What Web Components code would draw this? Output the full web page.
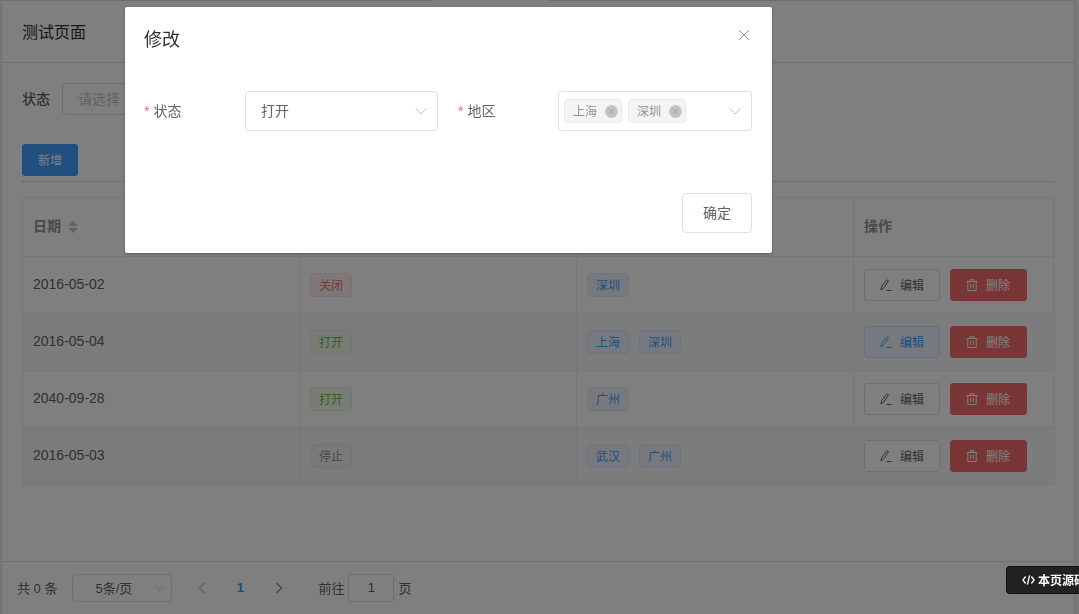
<!DOCTYPE html>
<html lang="zh">
<head>
<meta charset="utf-8">
<title>测试页面</title>
<style>
  html, body { margin: 0; height: 100%; overflow: hidden; background: #eef0f5; }
  body { font-family: "Liberation Sans", "Noto Sans CJK SC", sans-serif; color: #606266; font-size: 14px; }
</style>
</head>
<body>
<test-page></test-page>
<edit-dialog></edit-dialog>
<source-badge></source-badge>

<script>
const ICONS = {
  chevron: '<svg viewBox="0 0 12 7" width="12" height="7" fill="none" stroke="currentColor" stroke-width="1"><path d="M.5.5L6 6 11.5.5"/></svg>',
  left: '<svg viewBox="0 0 8 12" width="8" height="12" fill="none" stroke="currentColor" stroke-width="1.5"><path d="M6.5 1L1.5 6l5 5"/></svg>',
  right: '<svg viewBox="0 0 8 12" width="8" height="12" fill="none" stroke="currentColor" stroke-width="1.5"><path d="M1.5 1l5 5-5 5"/></svg>',
  close: '<svg viewBox="0 0 12 12" width="12" height="12" fill="none" stroke="currentColor" stroke-width="1"><path d="M1 1l10 10M11 1L1 11"/></svg>',
  edit: '<svg viewBox="0 0 12 12" width="12" height="12" fill="none" stroke="currentColor" stroke-width="1"><path d="M1 11l.6-3.4L6.4 1.4q.8-.8 1.5-.2t0 1.6L3.4 9.4zM6.5 11.5h5"/></svg>',
  trash: '<svg viewBox="0 0 12 12" width="12" height="12" fill="none" stroke="currentColor" stroke-width="1"><path d="M.5 2.5h11M4 2.5V.7h4v1.8M1.8 2.5v9h8.4v-9M4.7 4.8v4.4M7.3 4.8v4.4"/></svg>',
  code: '<svg viewBox="0 0 13 10" width="13" height="10" fill="none" stroke="currentColor" stroke-width="1.3"><path d="M3.6 1.5L.9 5l2.7 3.5M9.4 1.5L12.1 5 9.4 8.5M7.6.3L5.4 9.7"/></svg>'
};

function define(tag, css, html) {
  customElements.define(tag, class extends HTMLElement {
    connectedCallback() {
      if (this.shadowRoot) return;
      const root = this.attachShadow({ mode: 'open' });
      root.innerHTML = `<style>${css}</style>${typeof html === 'function' ? html(this) : html}`;
    }
  });
}

// lifts centered text a pixel, the CJK fallback sits low in its line box
const LIFT = 'margin-bottom: 2px;';

define('app-select', `
  :host { display: block; box-sizing: border-box; height: var(--h, 40px); border: 1px solid #dcdfe6; border-radius: 4px; background: #fff; color: #606266; }
  .box { display: flex; align-items: center; height: 100%; padding: 0 var(--pr, 10px) 0 var(--pl, 15px); }
  .val { flex: 1; min-width: 0; display: flex; align-items: center; font-size: var(--fs, 14px); }
  .txt { ${LIFT} }
  .ph { color: #c0c4cc; }
  .arrow { color: #c0c4cc; display: flex; }
  .arrow svg { width: var(--cw, 12px); }
`, el => `<div class="box"><div class="val">${el.hasAttribute('placeholder') ? `<span class="ph txt">${el.getAttribute('placeholder')}</span>` : el.hasAttribute('chips') ? '<slot></slot>' : '<span class="txt"><slot></slot></span>'}</div><span class="arrow">${ICONS.chevron}</span></div>`);

define('select-chip', `
  :host { display: inline-flex; align-items: center; box-sizing: border-box; height: 24px; width: 58px; padding: 0 3px 0 8px; margin-right: 6px; background: #f4f4f5; border: 1px solid #e9e9eb; border-radius: 4px; color: #909399; font-size: 12px; }
  .t { flex: 1; ${LIFT} }
  .x { display: flex; align-items: center; justify-content: center; width: 13px; height: 13px; border-radius: 50%; background: #c0c4cc; color: #909399; }
  svg { width: 7px; height: 7px; }
`, `<span class="t"><slot></slot></span><span class="x">${ICONS.close}</span>`);

define('app-tag', `
  :host { display: inline-flex; align-items: center; box-sizing: border-box; height: 24px; padding: 0 8px; border: 1px solid #d9ecff; border-radius: 4px; background: #ecf5ff; color: #409eff; font-size: 12px; white-space: nowrap; }
  :host([type=danger]) { background: #fef0f0; border-color: #fde2e2; color: #f56c6c; }
  :host([type=success]) { background: #f0f9eb; border-color: #e1f3d8; color: #67c23a; }
  :host([type=info]) { background: #f4f4f5; border-color: #e9e9eb; color: #909399; }
  span { ${LIFT} }
`, '<span><slot></slot></span>');

define('app-button', `
  :host { display: inline-flex; align-items: center; justify-content: center; box-sizing: border-box; height: 32px; padding: 0 15px; border: 1px solid #dcdfe6; border-radius: 3px; background: #fff; color: #606266; font-size: 12px; white-space: nowrap; }
  :host([hover]) { background: #ecf5ff; border-color: #c6e2ff; color: #409eff; }
  :host([type=danger]) { background: #f56c6c; border-color: #f56c6c; color: #fff; padding-right: 16px; }
  :host([type=primary]) { background: #409eff; border-color: #409eff; color: #fff; }
  :host([big]) { height: 40px; padding: 0 20px; font-size: 14px; border-radius: 4px; }
  svg { display: block; margin-right: 8px; }
  span { ${LIFT} }
`, el => `${el.getAttribute('icon') ? ICONS[el.getAttribute('icon')] : ''}<span><slot></slot></span>`);

define('sort-caret', `
  :host { display: inline-flex; flex-direction: column; gap: 2px; margin-left: 7px; }
  i { display: block; width: 0; height: 0; border: 5px solid transparent; border-top: 0; border-bottom: 5px solid #c0c4cc; }
  i + i { border-bottom: 0; border-top: 5px solid #c0c4cc; }
`, '<i></i><i></i>');

const ROWS = [
  ['2016-05-02', ['danger', '关闭'], ['深圳']],
  ['2016-05-04', ['success', '打开'], ['上海', '深圳'], true],
  ['2040-09-28', ['success', '打开'], ['广州']],
  ['2016-05-03', ['info', '停止'], ['武汉', '广州']]
];

define('data-table', `
  :host { display: block; }
  .table { display: grid; grid-template-columns: 277px 277px 277px 201px; border: solid #ebeef5; border-width: 1px 1px 0 1px; box-sizing: border-box; width: 1032px; }
  .cell { display: flex; align-items: center; gap: 10px; box-sizing: border-box; height: 57px; padding: 0 10px; border-bottom: 1px solid #ebeef5; border-right: 1px solid #ebeef5; color: #606266; }
  .cell:nth-child(4n) { border-right: 0; }
  .head { height: 59px; font-weight: 700; color: #909399; gap: 0; }
  .head span { margin-bottom: 4px; }
  .date { ${LIFT} }
  .zebra { background: #f9f9f9; }
`, () => {
  const head = ['<span>日期</span><sort-caret></sort-caret>', '<span>状态</span>', '<span>地区</span>', '<span>操作</span>'].map(h => `<div class="cell head">${h}</div>`).join('');
  const body = ROWS.map(([date, [type, state], areas, hover], i) => {
    const z = i % 2 ? ' zebra' : '';
    return `<div class="cell${z}"><span class="date">${date}</span></div>
      <div class="cell${z}"><app-tag type="${type}">${state}</app-tag></div>
      <div class="cell${z}">${areas.map(a => `<app-tag>${a}</app-tag>`).join('')}</div>
      <div class="cell${z}"><app-button icon="edit"${hover ? ' hover' : ''}>编辑</app-button><app-button icon="trash" type="danger">删除</app-button></div>`;
  }).join('');
  return `<div class="table">${head}${body}</div>`;
});

define('page-pagination', `
  :host { display: flex; align-items: center; box-sizing: border-box; height: 53px; padding: 0 0 0 15px; border-top: 1px solid #d8dde8; font-size: 13px; color: #606266; }
  .t { ${LIFT} }
  app-select { width: 100px; --h: 28px; --fs: 13px; --pl: 22px; --pr: 6px; --cw: 10px; margin-left: 15px; }
  .nav { display: flex; align-items: center; margin-left: 26px; color: #c0c4cc; }
  .num { width: 30px; margin: 0 20px 0 19px; text-align: center; font-weight: 700; color: #409eff; ${LIFT} }
  .jump { display: flex; align-items: center; margin-left: 35px; }
  .input { box-sizing: border-box; width: 46px; height: 28px; margin: 0 4px; border: 1px solid #dcdfe6; border-radius: 3px; display: flex; align-items: center; justify-content: center; }
  .next { color: #909399; }
`, `<span class="t">共 0 条</span><app-select>5条/页</app-select>
  <div class="nav"><span style="display:flex">${ICONS.left}</span><span class="num">1</span><span class="next" style="display:flex">${ICONS.right}</span></div>
  <div class="jump"><span class="t">前往</span><span class="input"><span class="t">1</span></span><span class="t">页</span></div>`);

define('test-page', `
  :host { display: flex; flex-direction: column; width: 1074px; height: 100vh; box-sizing: border-box; margin-left: 1px; border: solid #d8dde8; border-width: 0 1px 0 1px; background: #fff; }
  .edge { flex: none; display: flex; height: 1px; }
  .edge i { background: #d8dde8; }
  .edge i:first-child { width: 431px; margin-right: 116px; }
  .edge i:last-child { flex: 1; }
  .bar { flex: none; height: 62px; box-sizing: border-box; padding: 0 0 2px 20px; display: flex; align-items: center; border-bottom: 1px solid #d8dde8; color: #303133; font-size: 16px; }
  .main { flex: 1; padding: 0 0 0 20px; }
  .filter { display: flex; align-items: center; margin-top: 20px; font-weight: 500; }
  .filter .t { ${LIFT} }
  .filter app-select { width: 200px; margin-left: 12px; --h: 32px; font-weight: 400; }
  .tools { margin-top: 29px; padding-bottom: 5px; width: 1032px; border-bottom: 1px dotted #c0c4cc; }
  .tools app-button { width: 56px; padding: 0; }
  data-table { margin-top: 15px; }
`, `<div class="edge"><i></i><i></i></div>
  <div class="bar">测试页面</div>
  <div class="main">
    <div class="filter"><span class="t">状态</span><app-select placeholder="请选择"></app-select></div>
    <div class="tools"><app-button type="primary">新增</app-button></div>
    <data-table></data-table>
  </div>
  <page-pagination></page-pagination>`);

define('edit-dialog', `
  :host { position: fixed; inset: 0; display: block; background: rgba(0,0,0,.5); }
  .dialog { position: absolute; left: 125px; top: 7px; width: 647px; height: 246px; box-sizing: border-box; padding: 0 20px 20px 19px; display: flex; flex-direction: column; background: #fff; border-radius: 2px; box-shadow: 0 1px 3px rgba(0,0,0,.3); }
  .head { display: flex; justify-content: space-between; align-items: flex-start; height: 84px; }
  .title { margin-top: 21px; font-size: 18px; line-height: 24px; color: #303133; }
  .close { margin: 22px 2px 0 0; color: #909399; display: flex; }
  .form { display: grid; grid-template-columns: 101px 193px 120px 194px; align-items: center; }
  .label { color: #606266; white-space: nowrap; ${LIFT} }
  .label.second { margin-left: 20px; }
  .label b { font-weight: 400; color: #f56c6c; margin-right: 4px; }
  .foot { margin-top: auto; display: flex; justify-content: flex-end; }
`, `<div class="dialog">
    <div class="head"><span class="title">修改</span><span class="close">${ICONS.close}</span></div>
    <div class="form">
      <span class="label"><b>*</b>状态</span>
      <app-select>打开</app-select>
      <span class="label second"><b>*</b>地区</span>
      <app-select chips style="--pl:5px;--pr:10px"><select-chip>上海</select-chip><select-chip>深圳</select-chip></app-select>
    </div>
    <div class="foot"><app-button big>确定</app-button></div>
  </div>`);

define('source-badge', `
  :host { position: fixed; left: 1006px; top: 566px; display: flex; align-items: center; gap: 3px; box-sizing: border-box; width: 73px; height: 28px; padding-left: 15px; background: #222; border: 1px solid #111; border-right: 0; border-radius: 4px 0 0 4px; color: #fff; font-size: 12px; font-weight: 700; white-space: nowrap; overflow: hidden; }
  span { flex: none; ${LIFT} }
  svg { flex: none; display: block; }
`, `${ICONS.code}<span>本页源码</span>`);
</script>
</body>
</html>
